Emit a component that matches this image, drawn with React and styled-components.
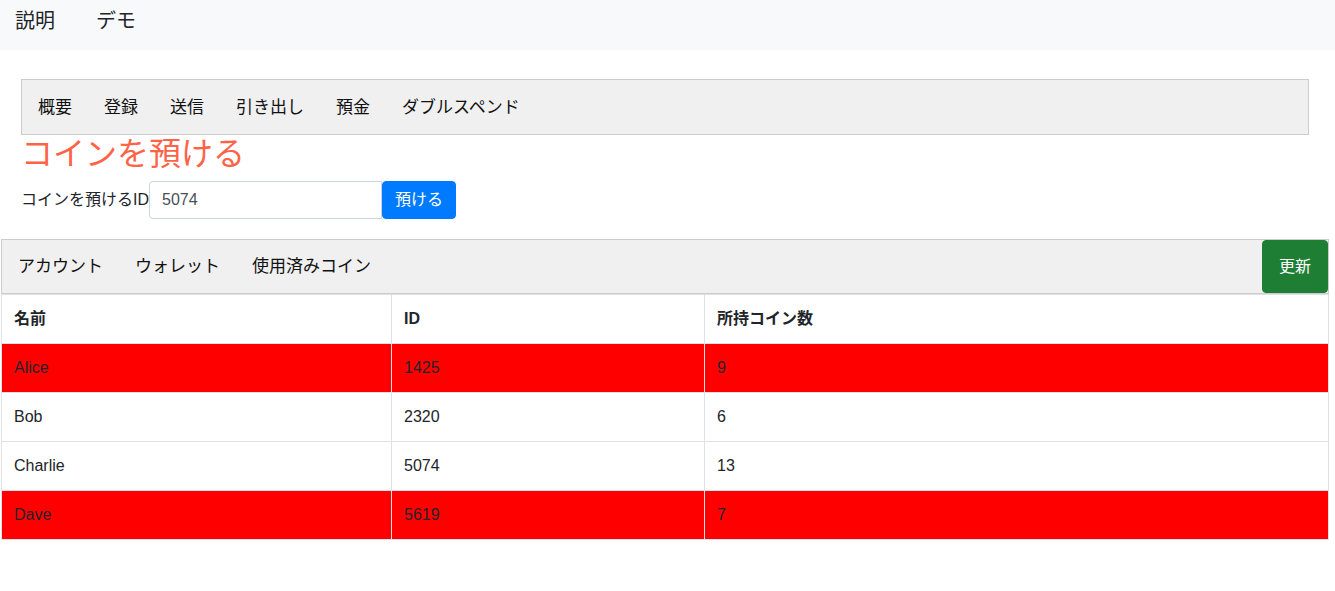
import React from "react";
import styled, { createGlobalStyle } from "styled-components";

const Global = createGlobalStyle`
  html, body { margin: 0; padding: 0; background: #fff; }
  body {
    font-family: "Liberation Sans", "Noto Sans CJK JP", sans-serif;
    font-size: 16px;
    line-height: 1.5;
    color: #212529;
  }
  * { box-sizing: border-box; }
`;

const TopNav = styled.nav`
  height: 50px;
  background: #f8f9fa;
  display: flex;
  align-items: flex-start;
  gap: 41px;
  padding: 6px 0 0 15px;
`;

const TopLink = styled.span`
  font-size: 20px;
  line-height: 30px;
  color: #212529;
`;

const Main = styled.div`
  margin: 29px 26px 0 21px;
`;

const TabBar = styled.div`
  display: flex;
  align-items: center;
  justify-content: space-between;
  height: ${(p) => p.$h || "55px"};
  background: #f0f0f0;
  border: 1px solid #cccccc;
`;

const TabList = styled.div`
  display: flex;
  align-items: center;
`;

const Tab = styled.span`
  padding: 0 16px;
  font-size: 17px;
  line-height: 25px;
  color: #111;
`;

const Title = styled.h2`
  margin: 0 0 8px;
  font-size: 32px;
  font-weight: 400;
  line-height: 38px;
  color: tomato;
`;

const FormRow = styled.div`
  display: flex;
  align-items: center;
`;

const Label = styled.label`
  font-size: 16px;
  color: #212529;
`;

const Input = styled.input`
  width: 233px;
  height: 38px;
  padding: 6px 12px;
  font-family: inherit;
  font-size: 16px;
  color: #495057;
  border: 1px solid #ced4da;
  border-radius: 4px 0 0 4px;
  outline: none;
`;

const Button = styled.button`
  height: ${(p) => p.$h || "38px"};
  padding: 0 ${(p) => p.$px || "12px"};
  font-family: inherit;
  font-size: 16px;
  line-height: 24px;
  color: #fff;
  background: ${(p) => p.$bg};
  border: 1px solid ${(p) => p.$bg};
  border-radius: 4px;
  cursor: pointer;
`;

const Lower = styled.div`
  margin: 20px 6px 0 1px;
`;

const Table = styled.table`
  width: 100%;
  border-collapse: collapse;
  table-layout: fixed;
`;

const Th = styled.th`
  text-align: left;
  font-weight: 700;
  padding: 12px;
  line-height: 24px;
  border: 1px solid #dee2e6;
`;

const Td = styled.td`
  padding: 12px;
  line-height: 24px;
  border: 1px solid #dee2e6;
`;

const Row = styled.tr`
  background: ${(p) => (p.$alert ? "#ff0000" : "#fff")};
`;

const rows = [
  { name: "Alice", id: 1425, coins: 9, alert: true },
  { name: "Bob", id: 2320, coins: 6 },
  { name: "Charlie", id: 5074, coins: 13 },
  { name: "Dave", id: 5619, coins: 7, alert: true },
];

export default function App() {
  return (
    <>
      <Global />
      <TopNav>
        <TopLink>説明</TopLink>
        <TopLink>デモ</TopLink>
      </TopNav>
      <Main>
        <TabBar $h="56px">
          <TabList>
            {["概要", "登録", "送信", "引き出し", "預金", "ダブルスペンド"].map((t) => (
              <Tab key={t}>{t}</Tab>
            ))}
          </TabList>
        </TabBar>
        <Title>コインを預ける</Title>
        <FormRow>
          <Label>コインを預けるID</Label>
          <Input defaultValue="5074" />
          <Button $bg="#007bff">預ける</Button>
        </FormRow>
      </Main>
      <Lower>
        <TabBar>
          <TabList>
            {["アカウント", "ウォレット", "使用済みコイン"].map((t) => (
              <Tab key={t}>{t}</Tab>
            ))}
          </TabList>
          <Button $bg="#1e7e34" $h="53px" $px="16px">更新</Button>
        </TabBar>
        <Table>
          <colgroup>
            <col style={{ width: 390 }} />
            <col style={{ width: 313 }} />
            <col />
          </colgroup>
          <thead>
            <tr>
              <Th>名前</Th>
              <Th>ID</Th>
              <Th>所持コイン数</Th>
            </tr>
          </thead>
          <tbody>
            {rows.map((r) => (
              <Row key={r.id} $alert={r.alert}>
                <Td>{r.name}</Td>
                <Td>{r.id}</Td>
                <Td>{r.coins}</Td>
              </Row>
            ))}
          </tbody>
        </Table>
      </Lower>
    </>
  );
}
